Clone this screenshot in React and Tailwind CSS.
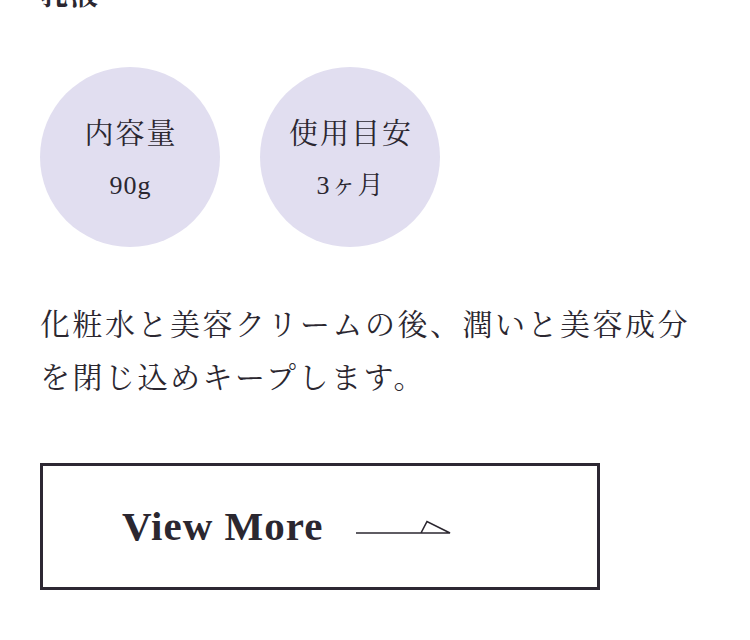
import React from "react";

const serif = {
  fontFamily: '"Liberation Serif", "Noto Serif CJK JP", "Noto Sans CJK JP", serif',
};

const specs = [
  { label: "内容量", value: "90g" },
  { label: "使用目安", value: "3ヶ月" },
];

const App = () => {
  return (
    <div className="w-[750px] h-[640px] overflow-hidden bg-white text-[#2b2730]" style={serif}>
      <div className="px-[40px]">
        {/* product name (cut off at top) */}
        <h2 className="-mt-[18px] text-[28px] leading-[28px] font-bold tracking-[2px]">乳液</h2>

        {/* spec circles */}
        <div className="mt-[57px] flex gap-[40px]">
          {specs.map((s) => (
            <div
              key={s.label}
              className="w-[180px] h-[180px] rounded-full bg-[#e1def0] flex flex-col items-center justify-center pt-[3px]"
            >
              <p className="text-[29px] leading-[28px] tracking-[2px] pl-[2px]">{s.label}</p>
              <p className="mt-[26px] text-[26px] leading-[24px] tracking-[1px] pl-[1px]">{s.value}</p>
            </div>
          ))}
        </div>

        {/* description */}
        <p className="mt-[51px] text-[30px] leading-[53px] tracking-[2.5px]">
          化粧水と美容クリームの後、潤いと美容成分を閉じ込めキープします。
        </p>

        {/* button */}
        <a
          href="#"
          className="mt-[59px] w-[560px] h-[127px] border-[3px] border-[#2d2833] flex items-center pl-[79px]"
        >
          <span className="text-[41px] leading-none font-bold tracking-[1px]">View More</span>
          <svg width="96" height="14" viewBox="0 0 96 14" className="ml-[33px]" fill="none">
            <path d="M0 13H94L71 1.5L65 13" stroke="#2b2730" strokeWidth="1.6" strokeLinejoin="miter" />
          </svg>
        </a>
      </div>
    </div>
  );
};

export default App;
